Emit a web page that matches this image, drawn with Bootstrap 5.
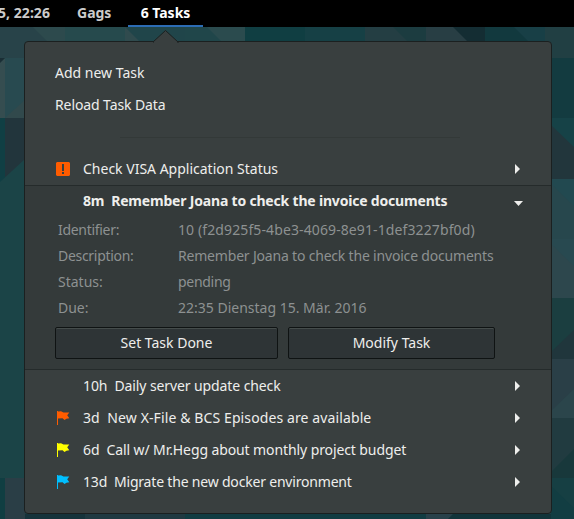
<!DOCTYPE html>
<html lang="en">
<head>
<meta charset="utf-8">
<title>Tasks</title>
<meta name="viewport" content="width=device-width, initial-scale=1">
<link href="https://cdn.jsdelivr.net/npm/bootstrap@5.3.0/dist/css/bootstrap.min.css" rel="stylesheet">
<style>
body{font-family:"Noto Sans","Open Sans",sans-serif;font-size:14px;line-height:20px;color:#eeeeec;background:#1c4347;width:574px;height:519px;overflow:hidden}
.wallpaper{left:0;top:0;z-index:0}
.topbar{height:27px;background:#000;color:#ccc;font-weight:700;padding-top:3px;z-index:2}
.topbar .entry{height:24px;white-space:nowrap}
.clock{width:50px;letter-spacing:.05px}
.gags{width:36px;margin-left:27px}
.active-entry{width:75px;margin-left:15px;color:#fff;border-bottom:2px solid #2c6cb4}
.task-menu{width:528px;height:473px;margin:14px 0 0 24px;background:#393f3f;border:1px solid #1b2020;border-radius:4px;padding-top:15px;z-index:1}
.pointer{left:128px;top:-12px}
.menu-row{height:32px;padding:0 27px 0 30px;white-space:nowrap}
.icon-slot{width:28px;display:flex;padding-left:1px}
.divider{height:1px;margin:16px 91px 15px 95px;background:#333938}
.open-task{height:185px;background:#343a3a;border-top:1px solid #252b2b;border-bottom:1px solid #252b2b}
.open-task .menu-row{height:31px;padding-bottom:2px}
.open-task .arrow{margin-top:5px}
.detail{height:26px;padding-left:33px;color:#8d9191;white-space:nowrap}
.detail dt{width:120px;font-weight:400}
.task-actions{padding:6px 0 0 30px;gap:10px}
.task-btn,.task-btn:hover{height:32px;background:#2e3436;border:1px solid #0f1313;border-radius:2px;color:#eeeeec;font-size:14px;line-height:20px;padding:0;box-shadow:inset 0 1px #454c4b}
.done{width:223px}
.modify{width:207px}
.t3{letter-spacing:-.3px}
.t2{letter-spacing:-.19px}
.t1{letter-spacing:-.1px}
.w1{letter-spacing:.11px}
</style>
</head>
<body class="position-relative">
<svg class="wallpaper position-absolute" width="574" height="519" aria-hidden="true">
<path fill="#284349" d="M0 27h65v31H0zM65 27h60v31H65z"/>
<path fill="#31494c" d="M33 27h32v31zM5 58h20v60H5z"/>
<path fill="#354d50" d="M0 62l5-4v60H0z"/>
<path fill="#1a2e35" d="M0 58h5l-5 5z"/>
<path fill="#284a50" d="M5 58h20v42L5 118z"/>
<path fill="#103f44" d="M0 118h5v64H0z"/>
<path fill="#22353c" d="M5 118h20v43L5 178z"/>
<path fill="#1b4447" d="M0 182l25-23v319H0z"/>
<path fill="#103e42" d="M0 478h5v41H0z"/>
<path fill="#2a3e46" d="M5 478h20v41H5z"/>
<path fill="#2d4a4d" d="M33 27h32v15H48z"/>
<path fill="#264a4d" d="M65 27h60v15H65z"/>
<path fill="#20454a" d="M125 27h60v15h-60z"/>
<path fill="#304b4e" d="M125 27l15 15h-15z"/>
<path fill="#20464a" d="M185 27h60v15h-60z"/>
<path fill="#2b4b4e" d="M207 27h38v15h-23z"/>
<path fill="#103e42" d="M245 27h60v15h-60z"/>
<path fill="#164045" d="M305 27h60v15h-60z"/>
<path fill="#243e43" d="M365 27h61v15h-61z"/>
<path fill="#1c3c40" d="M393 27h33v15h-18z"/>
<path fill="#283e44" d="M426 27h59v15h-59z"/>
<path fill="#142d33" d="M453 27h32v15h-17z"/>
<path fill="#12393e" d="M485 27h60v15h-60z"/>
<path fill="#183f46" d="M514 27h31v15h-16z"/>
<path fill="#213f43" d="M545 27h29v31h-29z"/>
<path fill="#133b40" d="M551 58h23v60h-23z"/>
<path fill="#164247" d="M551 118h23v61h-23z"/>
<path fill="#22363c" d="M551 125l23 22v32h-23z"/>
<path fill="#27474d" d="M551 179h23v60h-23z"/>
<path fill="#224950" d="M551 179h23v27l-23-22z"/>
<path fill="#2d474d" d="M551 239h23v59h-23z"/>
<path fill="#284950" d="M551 239h23v27l-23-22z"/>
<path fill="#1b3e40" d="M551 298h23v61h-23z"/>
<path fill="#20363c" d="M574 330v29h-23v-7z"/>
<path fill="#2a3f47" d="M551 359h23v59h-23z"/>
<path fill="#2b454b" d="M574 389v29h-23v-7z"/>
<path fill="#213b40" d="M551 418h23v60h-23z"/>
<path fill="#18383b" d="M574 449v29h-23v-6z"/>
<path fill="#163f43" d="M551 478h23v41h-23z"/>
<path fill="#123d42" d="M551 486l23 22v11h-23z"/>
<path fill="#16333b" d="M25 514h60v5H25z"/>
<path fill="#203941" d="M85 514h100v5H85z"/>
<path fill="#123c42" d="M185 514h241v5H185z"/>
<path fill="#29414a" d="M426 514h27l-5 5h-22z"/>
<path fill="#12343a" d="M453 514h98v5H448z"/>
</svg>
<svg class="d-none">
<symbol id="arrow-right" viewBox="0 0 5 10"><path d="M0 0l5 5-5 5z"/></symbol>
<symbol id="flag" viewBox="0 0 14 14"><path d="M1 0h1v14H1z"/><path d="M2 .6l3-.3 2.500 1.200H13.300L11.200 4.300l2.100 2.900Q10 7.200 8.500 9L6.500 7.200 2 7.600z"/></symbol>
</svg>
<header class="topbar d-flex position-relative">
<span class="entry clock d-flex justify-content-end"><span>5, 22:26</span></span><span class="entry gags">Gags</span><span class="entry active-entry text-center">6 Tasks</span>
</header>
<main class="task-menu position-relative">
<svg class="pointer position-absolute" width="26" height="13"><path d="M0 13V12L12.500 .5 25 12v1" fill="#393f3f" stroke="#1b2020"/></svg>
<div class="menu-row d-flex align-items-center"><span>Add new Task</span></div>
<div class="menu-row d-flex align-items-center"><span class="t1">Reload Task Data</span></div>
<div class="divider"></div>
<div class="menu-row d-flex align-items-center"><span class="icon-slot"><svg width="14" height="14"><path fill="#ff5c00" d="M1 0h12l1 1v12l-1 1H1l-1-1V1z"/><path fill="#393f3f" d="M6 2h2v7H6zm0 8h2v2H6z"/></svg></span><span>Check VISA Application Status</span><svg class="arrow ms-auto me-1" width="5" height="10" fill="#eeeeec"><use href="#arrow-right"/></svg></div>
<section class="open-task">
<div class="menu-row d-flex align-items-center fw-bold"><span class="icon-slot"></span><span class="t2">8m&nbsp; Remember Joana to check the invoice documents</span><svg class="arrow ms-auto" width="10" height="5" fill="#eeeeec"><path d="M0 0h9L4.500 5z"/></svg></div>
<dl class="mb-0">
<div class="detail d-flex align-items-center"><dt class="t3">Identifier:</dt><dd class="mb-0 w1">10 (f2d925f5-4be3-4069-8e91-1def3227bf0d)</dd></div>
<div class="detail d-flex align-items-center"><dt class="t3">Description:</dt><dd class="mb-0 t2">Remember Joana to check the invoice documents</dd></div>
<div class="detail d-flex align-items-center"><dt>Status:</dt><dd class="mb-0 t3">pending</dd></div>
<div class="detail d-flex align-items-center"><dt>Due:</dt><dd class="mb-0">22:35 Dienstag 15. Mär. 2016</dd></div>
</dl>
<div class="task-actions d-flex"><button class="btn task-btn done">Set Task Done</button><button class="btn task-btn modify">Modify Task</button></div>
</section>
<div class="menu-row d-flex align-items-center"><span class="icon-slot"></span><span class="t1">10h&nbsp; Daily server update check</span><svg class="arrow ms-auto me-1" width="5" height="10" fill="#eeeeec"><use href="#arrow-right"/></svg></div>
<div class="menu-row d-flex align-items-center"><span class="icon-slot"><svg width="14" height="14" fill="#ff5c00"><use href="#flag"/></svg></span><span class="w1">3d&nbsp; New X-File &amp; BCS Episodes are available</span><svg class="arrow ms-auto me-1" width="5" height="10" fill="#eeeeec"><use href="#arrow-right"/></svg></div>
<div class="menu-row d-flex align-items-center"><span class="icon-slot"><svg width="14" height="14" fill="#ffff00"><use href="#flag"/></svg></span><span class="t1">6d&nbsp; Call w/ Mr.Hegg about monthly project budget</span><svg class="arrow ms-auto me-1" width="5" height="10" fill="#eeeeec"><use href="#arrow-right"/></svg></div>
<div class="menu-row d-flex align-items-center"><span class="icon-slot"><svg width="14" height="14" fill="#00bfff"><use href="#flag"/></svg></span><span class="t2">13d&nbsp; Migrate the new docker environment</span><svg class="arrow ms-auto me-1" width="5" height="10" fill="#eeeeec"><use href="#arrow-right"/></svg></div>
</main>
<script src="https://cdn.jsdelivr.net/npm/bootstrap@5.3.0/dist/js/bootstrap.bundle.min.js"></script>
</body>
</html>
